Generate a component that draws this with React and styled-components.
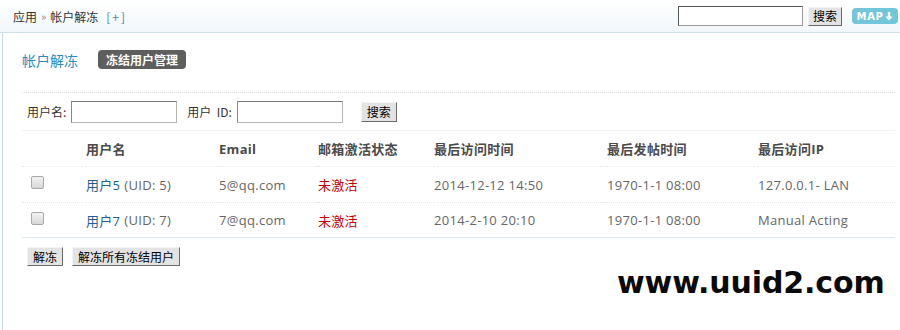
import React from "react";
import styled, { createGlobalStyle } from "styled-components";

const Global = createGlobalStyle`
  html, body { margin: 0; padding: 0; background: #fff; }
  body {
    width: 900px; height: 330px; overflow: hidden;
    font-family: "Open Sans", "Noto Sans CJK SC", sans-serif;
    font-size: 12px; color: #333;
  }
  * { box-sizing: border-box; }
`;

const Page = styled.div`
  position: relative;
  width: 900px;
  height: 330px;
`;

const TopBar = styled.div`
  height: 33px;
  display: flex;
  align-items: center;
  justify-content: space-between;
  padding: 0 2px 0 13px;
  background: linear-gradient(#ffffff, #f1f7fb);
  border-bottom: 1px solid #cfe2ec;
`;

const Crumbs = styled.div`
  display: flex;
  align-items: center;
  gap: 4px;
  font-size: 12px;
  color: #333;
  font-family: "Noto Sans CJK SC", sans-serif;
`;

const Sep = styled.span`
  color: #888;
  font-size: 11px;
`;

const Plus = styled.span`
  color: #5a7f96;
  margin-left: 4px;
  letter-spacing: 2px;
`;

const TopTools = styled.div`
  display: flex;
  align-items: center;
`;

const TopInput = styled.input`
  width: 125px;
  height: 20px;
  border: 1px solid #999;
  border-top-color: #555;
  border-left-color: #555;
  background: #fff;
  margin: 0;
`;

const OldButton = styled.button`
  font-family: "Noto Sans CJK SC", sans-serif;
  font-size: ${(p) => p.$size || 12}px;
  color: #000;
  background: #e3e3e3;
  border: 1px solid;
  border-color: #f4f4f4 #6a6a6a #6a6a6a #f4f4f4;
  height: ${(p) => p.$h || 20}px;
  padding: 0 ${(p) => p.$pad || 5}px;
  margin: 0 0 0 ${(p) => p.$ml || 0}px;
  line-height: 1;
  display: inline-flex;
  align-items: center;
  justify-content: center;
  cursor: pointer;
`;

const MapBadge = styled.span`
  margin-left: 10px;
  width: 46px;
  height: 16px;
  border-radius: 4px;
  background: #73c6d9;
  color: #fff;
  font-family: "DejaVu Sans", sans-serif;
  font-weight: bold;
  font-size: 10px;
  letter-spacing: 0.6px;
  display: inline-flex;
  align-items: center;
  justify-content: center;
  gap: 2px;
`;

const Main = styled.div`
  margin-left: 2px;
  border-left: 1px solid #c4dbe7;
  height: 297px;
  padding: 0 5px 0 19px;
`;

const TitleRow = styled.div`
  height: 60px;
  display: flex;
  align-items: center;
  gap: 20px;
  padding-bottom: 6px;
  border-bottom: 1px dotted #dcdcdc;
`;

const Title = styled.h1`
  margin: 0;
  font-size: 14px;
  font-weight: normal;
  color: #2b8bbd;
  font-family: "Noto Sans CJK SC", sans-serif;
`;

const Tag = styled.span`
  height: 19px;
  padding: 0 8px;
  border-radius: 4px;
  background: #5e5e5e;
  color: #fff;
  font-weight: bold;
  font-size: 12px;
  font-family: "Noto Sans CJK SC", sans-serif;
  display: inline-flex;
  align-items: center;
`;

const SearchRow = styled.div`
  height: 37px;
  display: flex;
  align-items: center;
  padding-left: 5px;
  font-family: "Noto Sans CJK SC", sans-serif;
  font-size: 12px;
  color: #333;
`;

const Label = styled.label`
  margin-right: ${(p) => p.$mr || 4}px;
  margin-left: ${(p) => p.$ml || 0}px;
`;

const Field = styled.input`
  width: 106px;
  height: 22px;
  border: 1px solid #b5b5b5;
  border-top-color: #777;
  border-left-color: #888;
  margin: 0;
`;

const Grid = styled.div`
  display: grid;
  grid-template-columns: 64px 133px 99px 116px 173px 151px 1fr;
  font-size: 13px;
`;

const Row = styled.div`
  display: contents;
`;

const Cell = styled.div`
  height: 36px;
  display: flex;
  align-items: center;
  border-top: 1px ${(p) => (p.$first ? "solid #eef2f4" : "dotted #e4e8ea")};
  ${(p) => p.$last && "border-bottom: 1px solid #dbe8ef;"}
  color: ${(p) => p.$color || "#666"};
  font-weight: ${(p) => (p.$head ? "bold" : "normal")};
  ${(p) => p.$head && "color: #4a4a4a;"}
  padding-left: ${(p) => p.$pl || 0}px;
  white-space: nowrap;
  font-family: "Open Sans", "Noto Sans CJK SC", sans-serif;
  letter-spacing: 0.3px;
`;

const Check = styled.span`
  width: 13px;
  height: 13px;
  border: 1px solid #a9a9a9;
  border-radius: 2px;
  background: linear-gradient(#f2f2f2, #d8d8d8);
  display: inline-block;
  position: relative;
  top: -2px;
`;

const UserLink = styled.a`
  color: #1f5e96;
  text-decoration: none;
  margin-right: 4px;
`;

const Actions = styled.div`
  display: flex;
  gap: 9px;
  padding: 9px 0 0 5px;
`;

const Watermark = styled.div`
  position: absolute;
  left: 617px;
  top: 265px;
  font-family: "DejaVu Sans", sans-serif;
  font-weight: bold;
  font-size: 30px;
  color: #0a0a0a;
  letter-spacing: -0.1px;
`;

const headers = ["", "用户名", "Email", "邮箱激活状态", "最后访问时间", "最后发帖时间", "最后访问IP"];
const rows = [
  { name: "用户5", uid: 5, email: "5@qq.com", visit: "2014-12-12 14:50", post: "1970-1-1 08:00", ip: "127.0.0.1- LAN" },
  { name: "用户7", uid: 7, email: "7@qq.com", visit: "2014-2-10 20:10", post: "1970-1-1 08:00", ip: "Manual Acting" },
];

export default function App() {
  return (
    <Page>
      <Global />
      <TopBar>
        <Crumbs>
          <span>应用</span>
          <Sep>»</Sep>
          <span>帐户解冻</span>
          <Plus>[+]</Plus>
        </Crumbs>
        <TopTools>
          <TopInput />
          <OldButton $ml={5} $h={19} $pad={4}>搜索</OldButton>
          <MapBadge>
            MAP
            <svg width="8" height="9" viewBox="0 0 8 9">
              <path d="M2.8 0h2.4v4.5H7.6L4 8.6 0.4 4.5h2.4z" fill="#fff" />
            </svg>
          </MapBadge>
        </TopTools>
      </TopBar>
      <Main>
        <TitleRow>
          <Title>帐户解冻</Title>
          <Tag>冻结用户管理</Tag>
        </TitleRow>
        <SearchRow>
          <Label $mr={5}>用户名:</Label>
          <Field />
          <Label $ml={10} $mr={5}>用户&nbsp;&nbsp;ID:</Label>
          <Field />
          <OldButton $ml={18} $h={20} $pad={5}>搜索</OldButton>
        </SearchRow>
        <Grid>
          <Row>
            {headers.map((h, i) => (
              <Cell key={i} $head $first>{h}</Cell>
            ))}
          </Row>
          {rows.map((r, ri) => {
            const last = ri === rows.length - 1;
            return (
              <Row key={r.uid}>
                <Cell $last={last} $pl={9}><Check /></Cell>
                <Cell $last={last}>
                  <UserLink href="#">{r.name}</UserLink>(UID: {r.uid})
                </Cell>
                <Cell $last={last}>{r.email}</Cell>
                <Cell $last={last} $color="#c00000">未激活</Cell>
                <Cell $last={last}>{r.visit}</Cell>
                <Cell $last={last}>{r.post}</Cell>
                <Cell $last={last}>{r.ip}</Cell>
              </Row>
            );
          })}
        </Grid>
        <Actions>
          <OldButton $size={12} $h={19} $pad={5}>解冻</OldButton>
          <OldButton $size={12} $h={19} $pad={5}>解冻所有冻结用户</OldButton>
        </Actions>
      </Main>
      <Watermark>www.uuid2.com</Watermark>
    </Page>
  );
}
